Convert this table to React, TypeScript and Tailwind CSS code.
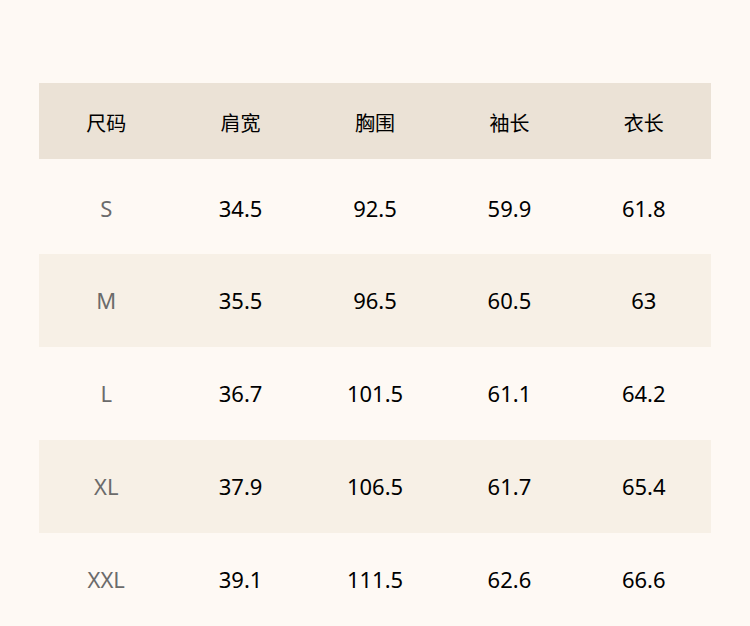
const headers = ['尺码', '肩宽', '胸围', '袖长', '衣长'];

const rows = [
  ['S', '34.5', '92.5', '59.9', '61.8'],
  ['M', '35.5', '96.5', '60.5', '63'],
  ['L', '36.7', '101.5', '61.1', '64.2'],
  ['XL', '37.9', '106.5', '61.7', '65.4'],
  ['XXL', '39.1', '111.5', '62.6', '66.6'],
];

export default function App() {
  return (
    <div
      className="min-h-[626px] w-full bg-[#fef9f4] px-[39px] pt-[83px] overflow-hidden"
      style={{ fontFamily: '"Noto Sans", "Noto Sans CJK SC", sans-serif' }}
    >
      <div className="w-[672px]">
        {/* Header */}
        <div className="grid grid-cols-5 h-[76px] pt-[5px] items-center bg-[#ebe2d6] text-[20px] text-black">
          {headers.map((h) => (
            <div key={h} className="text-center">{h}</div>
          ))}
        </div>

        {/* Rows */}
        {rows.map((row, i) => (
          <div
            key={row[0]}
            className={`grid grid-cols-5 items-center text-[22px] ${i === 0 ? 'h-[95px] pt-[4px]' : 'h-[93px]'} ${
              i % 2 === 1 ? 'bg-[#f7f0e6]' : ''
            }`}
          >
            {row.map((cell, j) => (
              <div key={j} className={`text-center ${j === 0 ? 'text-[#6b6b6b]' : 'text-black'}`}>
                {cell}
              </div>
            ))}
          </div>
        ))}
      </div>
    </div>
  );
}
